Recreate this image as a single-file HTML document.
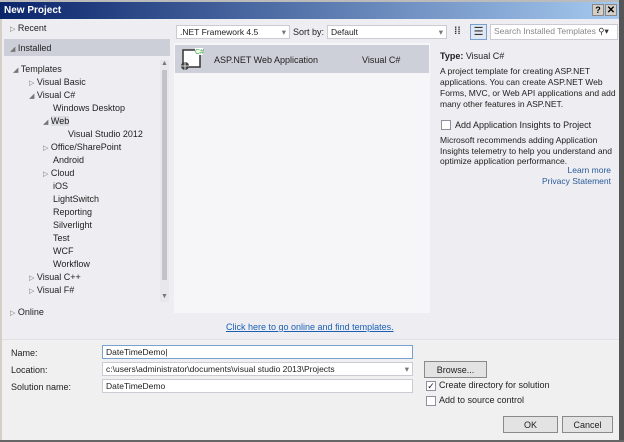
<!DOCTYPE html>
<html><head><style>
*{margin:0;padding:0;box-sizing:border-box}
body{width:624px;height:442px;overflow:hidden;background:#d4d0c8;font-family:"Liberation Sans",sans-serif;font-size:9px;color:#1e1e1e;position:relative}
.a{position:absolute;white-space:nowrap}
.tb{left:0;top:2px;width:621px;height:17px;background:linear-gradient(90deg,#0a246a,#a6caf0);color:#fff;font-weight:bold;font-size:10px;padding:3px 4px}
.win{left:2px;top:19px;width:617px;height:421px;background:#eeeef2}
.bot{left:2px;top:339px;width:617px;height:101px;background:#f0f0f0;border-top:1px solid #e0e0e6}
.box{background:#fff;border:1px solid #cbcbd3;height:14px;padding:1px 3px;font-size:8.5px}
.btn{background:#e3e3e3;border:1px solid #8a8a8a;text-align:center;font-size:9px;padding-top:3px}
.cb{width:10px;height:10px;border:1px solid #8f8f9d;background:#fff}
.tri{color:#777;font-size:7px}
</style></head><body>
<div class="a" style="left:0;top:0;width:624px;height:3px;background:#bbb"></div>
<div class="a tb">New Project</div>
<div class="a" style="left:592px;top:4px;width:12px;height:12px;background:#d4d0c8;border:1px solid #888;font-weight:bold;font-size:9px;text-align:center;color:#000">?</div>
<div class="a" style="left:605px;top:4px;width:12px;height:12px;background:#d4d0c8;border:1px solid #888;font-weight:bold;font-size:10px;text-align:center;line-height:11px;color:#000">✕</div>
<div class="a" style="left:619px;top:0;width:5px;height:442px;background:#555"></div>
<div class="a win"></div>
<div class="a" style="left:4px;top:39px;width:166px;height:17px;background:#cdcfd8"></div>
<div class="a" style="left:10px;top:23px"><span class="tri">▷</span> Recent</div>
<div class="a" style="left:10px;top:43px"><span class="tri">◢</span> Installed</div>
<div class="a" style="left:160px;top:60px;width:9px;height:242px;background:#e8e8ec"></div>
<div class="a" style="left:162px;top:70px;width:5px;height:210px;background:#c2c3c9"></div>
<div class="a tri" style="left:161px;top:60px">▲</div><div class="a tri" style="left:161px;top:293px">▼</div>
<div style="position:absolute;left:0;top:63px;line-height:13px">
<div class="a" style="left:13px;top:0"><span class="tri">◢</span> Templates</div>
<div class="a" style="left:29px;top:13px"><span class="tri">▷</span> Visual Basic</div>
<div class="a" style="left:29px;top:26px"><span class="tri">◢</span> Visual C#</div>
<div class="a" style="left:53px;top:39px">Windows Desktop</div>
<div class="a" style="left:43px;top:52px"><span class="tri">◢</span> <span style="background:#dcdde4">Web</span></div>
<div class="a" style="left:68px;top:65px">Visual Studio 2012</div>
<div class="a" style="left:43px;top:78px"><span class="tri">▷</span> Office/SharePoint</div>
<div class="a" style="left:53px;top:91px">Android</div>
<div class="a" style="left:43px;top:104px"><span class="tri">▷</span> Cloud</div>
<div class="a" style="left:53px;top:117px">iOS</div>
<div class="a" style="left:53px;top:130px">LightSwitch</div>
<div class="a" style="left:53px;top:143px">Reporting</div>
<div class="a" style="left:53px;top:156px">Silverlight</div>
<div class="a" style="left:53px;top:169px">Test</div>
<div class="a" style="left:53px;top:182px">WCF</div>
<div class="a" style="left:53px;top:195px">Workflow</div>
<div class="a" style="left:29px;top:208px"><span class="tri">▷</span> Visual C++</div>
<div class="a" style="left:29px;top:221px"><span class="tri">▷</span> Visual F#</div>
</div>
<div class="a" style="left:10px;top:307px"><span class="tri">▷</span> Online</div>
<div class="a" style="left:174px;top:43px;width:256px;height:270px;background:#f6f6f8"></div>
<div class="a" style="left:175px;top:45px;width:254px;height:28px;background:#cdd0d9"></div>
<svg class="a" style="left:180px;top:47px" width="24" height="24"><rect x="3" y="3" width="17" height="17" fill="#fff" stroke="#333" stroke-width="1.5"/><rect x="15" y="1" width="8" height="7" fill="#fff"/><text x="15" y="7" font-size="7" fill="#3a3" font-family="Liberation Sans">C#</text><circle cx="5" cy="19" r="4" fill="#444"/><path d="M1 19h8M5 15v8" stroke="#fff" stroke-width=".8"/></svg>
<div class="a" style="left:214px;top:55px">ASP.NET Web Application</div>
<div class="a" style="left:362px;top:55px">Visual C#</div>
<div class="a box" style="left:176px;top:25px;width:114px">.NET Framework 4.5<span style="float:right;color:#777">▾</span></div>
<div class="a" style="left:293px;top:27px">Sort by:</div>
<div class="a box" style="left:327px;top:25px;width:120px">Default<span style="float:right;color:#777">▾</span></div>
<div class="a" style="left:454px;top:26px;font-size:10px;color:#333;font-weight:bold">⁞⁞</div>
<div class="a" style="left:470px;top:24px;width:17px;height:16px;border:1px solid #7aa0d0;background:#e0e8f4;font-size:11px;text-align:center;color:#333">☰</div>
<div class="a box" style="left:490px;top:24px;width:128px;height:16px;color:#888">Search Installed Templates <span style="color:#333">⚲▾</span></div>
<div class="a" style="left:440px;top:51px"><b>Type:</b> Visual C#</div>
<div class="a" style="left:440px;top:66px;line-height:11px;white-space:normal;width:178px;font-size:8.5px">A project template for creating ASP.NET applications. You can create ASP.NET Web Forms, MVC, or Web API applications and add many other features in ASP.NET.</div>
<div class="a cb" style="left:441px;top:120px"></div>
<div class="a" style="left:455px;top:120px">Add Application Insights to Project</div>
<div class="a" style="left:440px;top:135px;line-height:10.5px;white-space:normal;width:178px;font-size:8.5px">Microsoft recommends adding Application Insights telemetry to help you understand and optimize application performance.</div>
<div class="a" style="left:440px;top:165px;width:171px;text-align:right;line-height:10.5px;color:#2a5a9a;font-size:8.5px">Learn more<br>Privacy Statement</div>
<div class="a" style="left:226px;top:322px;color:#1a5fb4;text-decoration:underline">Click here to go online and find templates.</div>
<div class="a bot"></div>
<div class="a" style="left:11px;top:348px">Name:</div>
<div class="a" style="left:11px;top:365px">Location:</div>
<div class="a" style="left:11px;top:382px">Solution name:</div>
<div class="a box" style="left:102px;top:345px;width:311px;border-color:#7aa0d0">DateTimeDemo|</div>
<div class="a box" style="left:102px;top:362px;width:311px">c:\users\administrator\documents\visual studio 2013\Projects<span style="float:right;color:#777">▾</span></div>
<div class="a box" style="left:102px;top:379px;width:311px">DateTimeDemo</div>
<div class="a btn" style="left:424px;top:361px;width:63px;height:17px">Browse...</div>
<div class="a cb" style="left:426px;top:381px;font-size:9px;line-height:8px;text-align:center">✓</div>
<div class="a" style="left:439px;top:380px">Create directory for solution</div>
<div class="a cb" style="left:426px;top:396px"></div>
<div class="a" style="left:439px;top:395px">Add to source control</div>
<div class="a btn" style="left:503px;top:416px;width:55px;height:17px">OK</div>
<div class="a btn" style="left:562px;top:416px;width:51px;height:17px">Cancel</div>
<div class="a" style="left:0;top:440px;width:624px;height:2px;background:#666"></div>
</body></html>
